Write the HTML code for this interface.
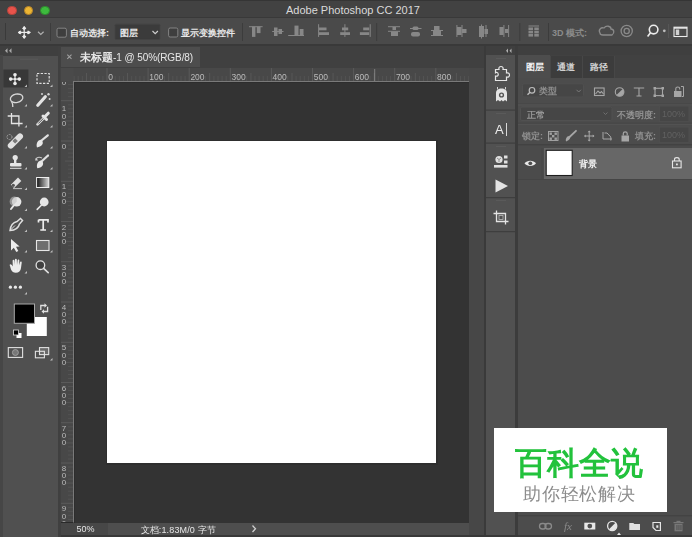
<!DOCTYPE html>
<html><head><meta charset="utf-8">
<style>
*{margin:0;padding:0;box-sizing:border-box}
html,body{width:692px;height:537px;overflow:hidden;background:#2a2a2a;font-family:"Liberation Sans",sans-serif}
.a{position:absolute}
svg{position:absolute;overflow:visible}
#wrap{position:absolute;left:0;top:0;width:692px;height:537px;overflow:hidden;filter:blur(0.4px)}
</style></head><body><div id="wrap">
<!-- title bar -->
<div class="a" style="left:0;top:0;width:692px;height:18px;background:#424242;border-top:1px solid #353535;border-bottom:1px solid #393939"></div>
<div class="a" style="left:7.2px;top:5.6px;width:9.6px;height:9.6px;border-radius:50%;background:#e8534b;border:0.7px solid #b8443c"></div>
<div class="a" style="left:23.9px;top:5.6px;width:9.6px;height:9.6px;border-radius:50%;background:#ecb533;border:0.7px solid #b8862a"></div>
<div class="a" style="left:40.2px;top:5.6px;width:9.6px;height:9.6px;border-radius:50%;background:#3dba3d;border:0.7px solid #2e8a2e"></div>
<div class="a" id="t_title" style="left:286px;top:4px;font-size:11px;color:#dadada">Adobe Photoshop CC 2017</div>
<!-- options bar -->
<div class="a" style="left:0;top:18px;width:692px;height:26px;background:#4a4a4a"></div>

<!-- options bar contents -->
<div class="a" style="left:5px;top:23px;width:1px;height:17px;background:#3a3a3a"></div>
<svg style="left:0;top:0" width="692" height="46" viewBox="0 0 692 46">
 <g fill="#ececec" stroke="none">
  <rect x="18.5" y="31.8" width="12" height="1.2"/>
  <rect x="23.6" y="26.5" width="1.2" height="12"/>
  <path d="M24.2 26 L26.4 28.8 L22 28.8Z M24.2 38.8 L26.4 36 L22 36Z M17.8 32.4 L20.6 30.2 L20.6 34.6Z M30.6 32.4 L27.8 30.2 L27.8 34.6Z"/><circle cx="24.2" cy="28.2" r="1.5"/><circle cx="24.2" cy="36.6" r="1.5"/><circle cx="20" cy="32.4" r="1.5"/><circle cx="28.4" cy="32.4" r="1.5"/>
 </g>
 <path d="M38 31.8 L40.8 34.4 L43.6 31.8" fill="none" stroke="#b0b0b0" stroke-width="1.2"/>
 <rect x="50" y="23" width="1" height="18" fill="#3c3c3c"/>
 <rect x="57" y="28.2" width="9.4" height="9" rx="1.5" fill="#3e3e3e" stroke="#8a8a8a" stroke-width="0.9"/>
 <rect x="115" y="24.2" width="45" height="15.2" rx="1" fill="#3b3b3b" stroke="#444" stroke-width="0.8"/>
 <path d="M152.5 31 L155.2 33.6 L157.9 31" fill="none" stroke="#cfcfcf" stroke-width="1.2"/>
 <rect x="168.6" y="28" width="9.2" height="9" rx="1.5" fill="#3e3e3e" stroke="#8a8a8a" stroke-width="0.9"/>
 <rect x="242" y="23" width="1" height="18" fill="#3c3c3c"/>
 <g fill="#878787">
  <rect x="249" y="26.2" width="13.6" height="1"/><rect x="252" y="26.6" width="3.4" height="10.3"/><rect x="256.8" y="26.6" width="3.7" height="6.5"/>
  <rect x="272.2" y="31" width="11.3" height="1"/><rect x="274" y="27.5" width="3.5" height="8.5"/><rect x="278.5" y="29" width="3.5" height="5"/>
  <rect x="288.2" y="35" width="15.8" height="1"/><rect x="294.5" y="25.6" width="4" height="9.9"/><rect x="299.7" y="29" width="3.8" height="6.5"/>
  <rect x="318.1" y="24.2" width="1" height="12.7"/><rect x="319" y="27.5" width="7.5" height="2.8"/><rect x="319" y="32.2" width="10" height="2.8"/>
  <rect x="344.4" y="24.2" width="1" height="12.7"/><rect x="342" y="27.5" width="6.2" height="2.8"/><rect x="340.2" y="32.2" width="9.8" height="2.8"/>
  <rect x="369.7" y="24.2" width="1" height="12.7"/><rect x="363.2" y="27.5" width="6" height="2.8"/><rect x="359.9" y="32.2" width="9.3" height="2.8"/>
  <rect x="388" y="26.2" width="12" height="1"/><rect x="392.5" y="27" width="3.5" height="3"/><rect x="388" y="30.8" width="12" height="1"/><rect x="391" y="31.5" width="7" height="4.5"/>
  <rect x="410" y="28" width="11.5" height="1"/><rect x="412.5" y="26.5" width="6" height="3.5" rx="1.5"/><rect x="411" y="32" width="9" height="4.5" rx="2"/>
  <rect x="434" y="26" width="5.5" height="4.3"/><rect x="431" y="30" width="12" height="1"/><rect x="433" y="31" width="8" height="4"/><rect x="431" y="35" width="12" height="1"/>
  <rect x="456.4" y="25" width="1" height="12"/><rect x="461.5" y="25" width="1" height="12"/><rect x="457" y="27" width="4.5" height="8"/><rect x="462" y="29" width="4.5" height="4"/>
  <rect x="479" y="26" width="5" height="11"/><rect x="484.5" y="29" width="3.5" height="5"/><rect x="481" y="24.5" width="1" height="14"/><rect x="485.5" y="25" width="1" height="12"/>
  <rect x="503.4" y="25" width="1" height="12"/><rect x="508.1" y="25" width="1" height="12"/><rect x="499.5" y="27" width="4" height="8"/><rect x="505" y="29" width="3" height="4"/>
 </g>
 <rect x="376.2" y="23" width="1" height="18" fill="#3c3c3c"/>
 <rect x="519.3" y="23" width="1" height="18" fill="#3c3c3c"/>
 <g fill="#878787">
  <rect x="528.5" y="25.5" width="10.5" height="1"/>
  <rect x="528.5" y="27.5" width="4.5" height="2.6"/><rect x="534.3" y="27.5" width="4.5" height="2.6"/>
  <rect x="528.5" y="30.8" width="4.5" height="2.6"/><rect x="534.3" y="30.8" width="4.5" height="2.6"/>
  <rect x="528.5" y="34" width="4.5" height="2.6"/><rect x="534.3" y="34" width="4.5" height="2.6"/>
 </g>
 <rect x="548" y="23" width="1" height="18" fill="#3c3c3c"/>
 <g fill="none" stroke="#8a8a8a" stroke-width="1.3">
  <path d="M600 33 C598 30 601 27 604 28 C606 25 611 26 611 29 C614 29 615 33 612 35 L603 35 C601 35 600 34 600 33Z"/>
  <circle cx="626.7" cy="31" r="5.6"/><circle cx="626.7" cy="31" r="2.6"/>
 </g>
 <g fill="none" stroke="#ececec" stroke-width="1.6">
  <circle cx="653.6" cy="29.6" r="4.3"/><path d="M650.5 32.7 L647.6 36.6"/>
 </g>
 <circle cx="664.3" cy="30.8" r="1.4" fill="#bdbdbd"/>
 <rect x="668.3" y="24" width="0.8" height="14" fill="#5c5c5c"/>
 <rect x="674" y="27.2" width="13" height="9.3" fill="none" stroke="#ececec" stroke-width="1.1"/>
 <rect x="674" y="27.2" width="13" height="1.5" fill="#ececec"/>
 <rect x="675.8" y="29.5" width="3.4" height="5.5" fill="#cfcfcf"/>
</svg>
<div class="a" id="t_auto" style="left:70px;top:27px;font-size:9px;color:#e8e8e8;font-weight:bold">自动选择:</div>
<div class="a" id="t_layer" style="left:120px;top:27px;font-size:9px;color:#e8e8e8;font-weight:bold">图层</div>
<div class="a" id="t_show" style="left:181px;top:27px;font-size:9px;color:#e8e8e8;font-weight:bold">显示变换控件</div>
<div class="a" id="t_3d" style="left:552px;top:27px;font-size:9px;color:#8c8c8c;font-weight:bold">3D 模式:</div>
<!-- under options line -->
<div class="a" style="left:0;top:44px;width:692px;height:2.5px;background:#393939"></div>
<!-- left toolbar -->
<div class="a" style="left:0;top:46px;width:58px;height:491px;background:#505050"></div>
<div class="a" style="left:0;top:46px;width:58.3px;height:9.5px;background:#3f3f3f"></div>

<!-- toolbar contents -->
<div class="a" style="left:0;top:55px;width:2.5px;height:482px;background:#464646"></div>
<svg style="left:0;top:0" width="58" height="537" viewBox="0 0 58 537">
 <g fill="#a8a8a8"><path d="M7.5 48.3 L5 50.8 L7.5 53.3Z M11.5 48.3 L9 50.8 L11.5 53.3Z"/></g><rect x="20" y="58.8" width="18" height="0.8" fill="#5c5c5c"/>
 <rect x="3.4" y="69.5" width="25" height="18" fill="#383838"/>
 <!-- move -->
 <g fill="#ececec">
  <rect x="10.5" y="78.5" width="9" height="1.2"/><rect x="14.4" y="74.6" width="1.2" height="9"/>
  <circle cx="15" cy="74.8" r="1.8"/><circle cx="15" cy="83.5" r="1.8"/><circle cx="10.7" cy="79.1" r="1.8"/><circle cx="19.3" cy="79.1" r="1.8"/>
  <circle cx="15" cy="79.1" r="1.1"/>
 </g>
 <!-- marquee -->
 <rect x="37" y="73.5" width="12.2" height="9.8" fill="none" stroke="#dedede" stroke-width="1.2" stroke-dasharray="2.3 1.4"/>
 <!-- lasso -->
 <g fill="none" stroke="#d8d8d8" stroke-width="1.3">
  <ellipse cx="16.6" cy="98.3" rx="6.3" ry="4.2" transform="rotate(-12 16.6 98.3)"/>
  <path d="M11.5 101.5 C12.5 103 13 104.5 12.8 107"/>
 </g>
 <!-- magic wand -->
 <path d="M37.8 105.3 L45.3 96.8" stroke="#e4e4e4" stroke-width="3.2" stroke-linecap="round"/>
 <g fill="#d4d4d4"><circle cx="42" cy="94" r="1"/><circle cx="48.5" cy="94.3" r="1.2"/><circle cx="49.6" cy="99" r="1"/></g>
 <!-- crop -->
 <g fill="none" stroke="#e4e4e4" stroke-width="1.3">
  <path d="M11.5 113 V123.5 H22.6"/><path d="M7.7 116 H18.9 V126.5"/>
 </g>
 <!-- eyedropper -->
 <path d="M37.5 124.3 L44.5 117.3" stroke="#dcdcdc" stroke-width="2.6" stroke-linecap="round" fill="none"/>
 <path d="M38.3 123.5 L44 117.8" stroke="#535353" stroke-width="1" fill="none"/>
 <path d="M43 116 L46.5 119.5 M45 116.5 L48.3 113.2" stroke="#e4e4e4" stroke-width="3" stroke-linecap="round"/>
 <!-- healing -->
 <path d="M10.8 145.6 L20 136.4" stroke="#e0e0e0" stroke-width="6" stroke-linecap="round"/>
 <rect x="13.2" y="139" width="3.8" height="3.8" transform="rotate(-45 15.1 140.9)" fill="#777"/>
 <circle cx="9.5" cy="137" r="2.5" fill="none" stroke="#bdbdbd" stroke-width="0.9" stroke-dasharray="1 0.8"/>
 <!-- brush -->
 <path d="M41.5 140.5 L47.8 135.3" stroke="#e0e0e0" stroke-width="2.2" stroke-linecap="round"/>
 <path d="M37 147.5 C36 144.5 37 140.5 40.5 139.8 C42.8 140.5 43.5 143 42.3 144.6 C41 146.4 39 147.2 37 147.5Z" fill="#e8e8e8"/>
 <!-- stamp -->
 <g fill="#e4e4e4">
  <circle cx="15.2" cy="157.5" r="2.6"/><rect x="14" y="158" width="2.4" height="5"/>
  <rect x="10" y="163" width="11.5" height="3.6" rx="1"/><rect x="10" y="167.8" width="11.5" height="1"/>
 </g>
 <!-- history brush -->
 <path d="M41.5 161.5 L48 155.5" stroke="#e0e0e0" stroke-width="2.2" stroke-linecap="round"/>
 <path d="M37.3 168.3 C36.3 165.3 37.3 161.3 40.8 160.6 C43.1 161.3 43.8 163.8 42.6 165.4 C41.3 167.2 39.3 168 37.3 168.3Z" fill="#e8e8e8"/>
 <path d="M35.5 159.5 C36 157.5 39 156.5 42 158" stroke="#c8c8c8" stroke-width="1.1" fill="none"/>
 <path d="M35 160.5 L38 160.5 L36.5 158Z" fill="#d0d0d0"/>
 <!-- eraser -->
 <path d="M10.8 184.8 L18 177.6 L21.3 180.9 L14.1 188.1Z" fill="#e0e0e0"/>
 <circle cx="13.3" cy="185.3" r="1.6" fill="#555"/>
 <rect x="13" y="188.2" width="9" height="0.9" fill="#cfcfcf"/>
 <!-- gradient -->
 <defs><linearGradient id="gr" x1="0" x2="1" y1="0" y2="0"><stop offset="0" stop-color="#111"/><stop offset="1" stop-color="#d8d8d8"/></linearGradient></defs>
 <rect x="36.6" y="177.5" width="12.2" height="10" fill="url(#gr)" stroke="#efefef" stroke-width="1"/>
 <!-- dodge/burn -->
 <circle cx="16.6" cy="201.8" r="4.8" fill="#e6e6e6"/>
 <path d="M14.5 204.5 L11 209" stroke="#e6e6e6" stroke-width="2" stroke-linecap="round"/>
 <path d="M16.6 201.8 L12.5 206 A4.8 4.8 0 0 1 16.6 197Z" fill="#c2c2c2" opacity="0.6"/>
 <circle cx="44.2" cy="202" r="4.4" fill="#e6e6e6"/>
 <path d="M41.8 204.8 L37.2 209.4" stroke="#e6e6e6" stroke-width="1.6" stroke-linecap="round"/>
 <!-- pen -->
 <path d="M10 230.5 C10.5 226 13 222.5 17 221.5 L20.5 218.5 L22.5 220.5 L19.5 224 C18.5 228 15 230.3 10 230.5Z" fill="none" stroke="#dedede" stroke-width="1.5"/>
 <path d="M10.5 230 L15 225.5" stroke="#dedede" stroke-width="1"/>
 <!-- type -->
 <path d="M38.5 219.8 H48 V222.5 M38.5 222.5 V219.8 M43.2 220 V230 M40.3 230 H46" fill="none" stroke="#ececec" stroke-width="1.7"/>
 <!-- path select -->
 <path d="M11 239 L11 250.5 L13.8 247.8 L16.3 252 L18.3 251 L16 246.8 L19.6 246.4Z" fill="#ececec"/>
 <!-- rectangle -->
 <rect x="36.5" y="240.5" width="12.5" height="10" fill="#6e6e6e" stroke="#e6e6e6" stroke-width="1.1"/>
 <!-- hand -->
 <path d="M10 266 C9 264.5 10.5 263.5 11.8 265 L12.8 266.5 L12.6 260.8 C12.6 259.5 14.3 259.5 14.4 260.8 L14.6 265 L14.9 259.6 C15 258.4 16.7 258.4 16.8 259.6 L17 265 L17.6 260.3 C17.8 259 19.4 259.2 19.3 260.5 L19.2 265.3 L20 262.3 C20.3 261.2 21.9 261.5 21.7 262.7 L21 268 C20.7 270.8 18.8 272.8 15.8 272.8 C13.4 272.8 12.2 271.6 11 269.5Z" fill="#ececec"/>
 <!-- zoom -->
 <circle cx="40.4" cy="265.2" r="4.3" fill="#404040" stroke="#e0e0e0" stroke-width="1.3"/>
 <path d="M43.6 268.4 L48.2 272.6" stroke="#e0e0e0" stroke-width="1.6" stroke-linecap="round"/>
 <!-- dots -->
 <g fill="#e8e8e8"><circle cx="10.4" cy="287.2" r="1.6"/><circle cx="15.4" cy="287.2" r="1.6"/><circle cx="20.4" cy="287.2" r="1.6"/></g>
 <!-- little triangles -->
 <g fill="#bdbdbd">
  <path d="M27 84.5 L27 87 L24.5 87Z"/><path d="M52.5 84.5 L52.5 87 L50 87Z"/>
  <path d="M27 104 L27 106.5 L24.5 106.5Z"/><path d="M52.5 104 L52.5 106.5 L50 106.5Z"/>
  <path d="M27 125 L27 127.5 L24.5 127.5Z"/><path d="M52.5 125 L52.5 127.5 L50 127.5Z"/>
  <path d="M27 146 L27 148.5 L24.5 148.5Z"/><path d="M52.5 146 L52.5 148.5 L50 148.5Z"/>
  <path d="M27 167 L27 169.5 L24.5 169.5Z"/><path d="M52.5 167 L52.5 169.5 L50 169.5Z"/>
  <path d="M27 187.5 L27 190 L24.5 190Z"/><path d="M52.5 187.5 L52.5 190 L50 190Z"/>
  <path d="M27 208.5 L27 211 L24.5 211Z"/><path d="M52.5 208.5 L52.5 211 L50 211Z"/>
  <path d="M27 229.5 L27 232 L24.5 232Z"/><path d="M52.5 229.5 L52.5 232 L50 232Z"/>
  <path d="M27 250 L27 252.5 L24.5 252.5Z"/><path d="M52.5 250 L52.5 252.5 L50 252.5Z"/>
  <path d="M27 271 L27 273.5 L24.5 273.5Z"/>
  <path d="M27 292 L27 294.5 L24.5 294.5Z"/>
  <path d="M52.5 358 L52.5 360.5 L50 360.5Z"/>
 </g>
 <!-- colors -->
 <rect x="26.8" y="317" width="20" height="19" fill="#ffffff"/>
 <rect x="14.3" y="304" width="20.2" height="19.3" fill="#000" stroke="#a8a8a8" stroke-width="1"/>
 <path d="M40.8 310 V305.5 H45" fill="none" stroke="#e0e0e0" stroke-width="1.3"/><path d="M44.5 303.3 L47 305.5 L44.5 307.7Z" fill="#e0e0e0"/><path d="M47.6 306.8 V311.5 H43.5" fill="none" stroke="#e0e0e0" stroke-width="1.3"/><path d="M44 309.3 L41.5 311.5 L44 313.7Z" fill="#e0e0e0"/>
 <rect x="16.5" y="333" width="5" height="5" fill="#fff"/>
 <rect x="13.5" y="330" width="5" height="5" fill="#000" stroke="#ddd" stroke-width="0.8"/>
 <!-- quick mask -->
 <rect x="8.3" y="347.6" width="14.3" height="9.8" fill="none" stroke="#e0e0e0" stroke-width="1.1"/>
 <circle cx="15.4" cy="352.5" r="3" fill="#777" stroke="#aaa" stroke-width="0.8"/>
 <!-- screen mode -->
 <rect x="39.5" y="347.6" width="9.2" height="7" fill="#6a6a6a" stroke="#e0e0e0" stroke-width="1.1"/>
 <rect x="35.4" y="351.3" width="9" height="6.5" fill="none" stroke="#e0e0e0" stroke-width="1.1"/>
</svg>
<!-- divider -->
<div class="a" style="left:58.3px;top:46px;width:2.3px;height:491px;background:#404040"></div>
<!-- doc tab bar -->
<div class="a" style="left:60.6px;top:46px;width:423.4px;height:22px;background:#404040"></div>
<div class="a" style="left:60.6px;top:46.5px;width:139px;height:20.7px;background:#4d4d4d"></div>
<svg style="left:0;top:0" width="80" height="70"><path d="M67.3 54.6 L71.5 58.8 M71.5 54.6 L67.3 58.8" stroke="#a0a0a0" stroke-width="1.1"/></svg>
<div class="a" id="t_tab" style="left:80px;top:50.5px;font-size:10px;color:#e8e8e8;letter-spacing:-0.08px"><b style="font-size:10.5px;letter-spacing:0">未标题</b>-1 @ 50%(RGB/8)</div>
<!-- rulers -->
<svg style="left:0;top:0" width="692" height="537" viewBox="0 0 692 537">
<rect x="60.6" y="68" width="408.9" height="13.5" fill="#484848"/>
<rect x="60.6" y="68" width="12.9" height="454" fill="#484848"/>
<rect x="61" y="68" width="12.5" height="13.5" fill="#4a4a4a"/>
<rect x="73" y="81" width="396" height="1" fill="#7a7a7a"/>
<rect x="73" y="81" width="1" height="441.5" fill="#7a7a7a"/>
<rect x="73.6" y="76" width="1" height="5" fill="#535353"/>
<rect x="77.7" y="76" width="1" height="5" fill="#535353"/>
<rect x="81.8" y="76" width="1" height="5" fill="#535353"/>
<rect x="86.0" y="73" width="1" height="8" fill="#575757"/>
<rect x="90.1" y="76" width="1" height="5" fill="#535353"/>
<rect x="94.2" y="76" width="1" height="5" fill="#535353"/>
<rect x="98.3" y="76" width="1" height="5" fill="#535353"/>
<rect x="102.4" y="76" width="1" height="5" fill="#535353"/>
<rect x="106.5" y="68" width="1" height="13" fill="#5a5a5a"/>
<rect x="110.6" y="76" width="1" height="5" fill="#535353"/>
<rect x="114.7" y="76" width="1" height="5" fill="#535353"/>
<rect x="118.8" y="76" width="1" height="5" fill="#535353"/>
<rect x="122.9" y="76" width="1" height="5" fill="#535353"/>
<rect x="127.0" y="73" width="1" height="8" fill="#575757"/>
<rect x="131.2" y="76" width="1" height="5" fill="#535353"/>
<rect x="135.3" y="76" width="1" height="5" fill="#535353"/>
<rect x="139.4" y="76" width="1" height="5" fill="#535353"/>
<rect x="143.5" y="76" width="1" height="5" fill="#535353"/>
<rect x="147.6" y="68" width="1" height="13" fill="#5a5a5a"/>
<rect x="151.7" y="76" width="1" height="5" fill="#535353"/>
<rect x="155.8" y="76" width="1" height="5" fill="#535353"/>
<rect x="159.9" y="76" width="1" height="5" fill="#535353"/>
<rect x="164.0" y="76" width="1" height="5" fill="#535353"/>
<rect x="168.2" y="73" width="1" height="8" fill="#575757"/>
<rect x="172.3" y="76" width="1" height="5" fill="#535353"/>
<rect x="176.4" y="76" width="1" height="5" fill="#535353"/>
<rect x="180.5" y="76" width="1" height="5" fill="#535353"/>
<rect x="184.6" y="76" width="1" height="5" fill="#535353"/>
<rect x="188.7" y="68" width="1" height="13" fill="#5a5a5a"/>
<rect x="192.8" y="76" width="1" height="5" fill="#535353"/>
<rect x="196.9" y="76" width="1" height="5" fill="#535353"/>
<rect x="201.0" y="76" width="1" height="5" fill="#535353"/>
<rect x="205.1" y="76" width="1" height="5" fill="#535353"/>
<rect x="209.2" y="73" width="1" height="8" fill="#575757"/>
<rect x="213.4" y="76" width="1" height="5" fill="#535353"/>
<rect x="217.5" y="76" width="1" height="5" fill="#535353"/>
<rect x="221.6" y="76" width="1" height="5" fill="#535353"/>
<rect x="225.7" y="76" width="1" height="5" fill="#535353"/>
<rect x="229.8" y="68" width="1" height="13" fill="#5a5a5a"/>
<rect x="233.9" y="76" width="1" height="5" fill="#535353"/>
<rect x="238.0" y="76" width="1" height="5" fill="#535353"/>
<rect x="242.1" y="76" width="1" height="5" fill="#535353"/>
<rect x="246.2" y="76" width="1" height="5" fill="#535353"/>
<rect x="250.4" y="73" width="1" height="8" fill="#575757"/>
<rect x="254.5" y="76" width="1" height="5" fill="#535353"/>
<rect x="258.6" y="76" width="1" height="5" fill="#535353"/>
<rect x="262.7" y="76" width="1" height="5" fill="#535353"/>
<rect x="266.8" y="76" width="1" height="5" fill="#535353"/>
<rect x="270.9" y="68" width="1" height="13" fill="#5a5a5a"/>
<rect x="275.0" y="76" width="1" height="5" fill="#535353"/>
<rect x="279.1" y="76" width="1" height="5" fill="#535353"/>
<rect x="283.2" y="76" width="1" height="5" fill="#535353"/>
<rect x="287.3" y="76" width="1" height="5" fill="#535353"/>
<rect x="291.5" y="73" width="1" height="8" fill="#575757"/>
<rect x="295.6" y="76" width="1" height="5" fill="#535353"/>
<rect x="299.7" y="76" width="1" height="5" fill="#535353"/>
<rect x="303.8" y="76" width="1" height="5" fill="#535353"/>
<rect x="307.9" y="76" width="1" height="5" fill="#535353"/>
<rect x="312.0" y="68" width="1" height="13" fill="#5a5a5a"/>
<rect x="316.1" y="76" width="1" height="5" fill="#535353"/>
<rect x="320.2" y="76" width="1" height="5" fill="#535353"/>
<rect x="324.3" y="76" width="1" height="5" fill="#535353"/>
<rect x="328.4" y="76" width="1" height="5" fill="#535353"/>
<rect x="332.6" y="73" width="1" height="8" fill="#575757"/>
<rect x="336.7" y="76" width="1" height="5" fill="#535353"/>
<rect x="340.8" y="76" width="1" height="5" fill="#535353"/>
<rect x="344.9" y="76" width="1" height="5" fill="#535353"/>
<rect x="349.0" y="76" width="1" height="5" fill="#535353"/>
<rect x="353.1" y="68" width="1" height="13" fill="#5a5a5a"/>
<rect x="357.2" y="76" width="1" height="5" fill="#535353"/>
<rect x="361.3" y="76" width="1" height="5" fill="#535353"/>
<rect x="365.4" y="76" width="1" height="5" fill="#535353"/>
<rect x="369.5" y="76" width="1" height="5" fill="#535353"/>
<rect x="373.7" y="73" width="1" height="8" fill="#575757"/>
<rect x="377.8" y="76" width="1" height="5" fill="#535353"/>
<rect x="381.9" y="76" width="1" height="5" fill="#535353"/>
<rect x="386.0" y="76" width="1" height="5" fill="#535353"/>
<rect x="390.1" y="76" width="1" height="5" fill="#535353"/>
<rect x="394.2" y="68" width="1" height="13" fill="#5a5a5a"/>
<rect x="398.3" y="76" width="1" height="5" fill="#535353"/>
<rect x="402.4" y="76" width="1" height="5" fill="#535353"/>
<rect x="406.5" y="76" width="1" height="5" fill="#535353"/>
<rect x="410.6" y="76" width="1" height="5" fill="#535353"/>
<rect x="414.8" y="73" width="1" height="8" fill="#575757"/>
<rect x="418.9" y="76" width="1" height="5" fill="#535353"/>
<rect x="423.0" y="76" width="1" height="5" fill="#535353"/>
<rect x="427.1" y="76" width="1" height="5" fill="#535353"/>
<rect x="431.2" y="76" width="1" height="5" fill="#535353"/>
<rect x="435.3" y="68" width="1" height="13" fill="#5a5a5a"/>
<rect x="439.4" y="76" width="1" height="5" fill="#535353"/>
<rect x="443.5" y="76" width="1" height="5" fill="#535353"/>
<rect x="447.6" y="76" width="1" height="5" fill="#535353"/>
<rect x="451.7" y="76" width="1" height="5" fill="#535353"/>
<rect x="455.9" y="73" width="1" height="8" fill="#575757"/>
<rect x="460.0" y="76" width="1" height="5" fill="#535353"/>
<rect x="464.1" y="76" width="1" height="5" fill="#535353"/>
<rect x="468.2" y="76" width="1" height="5" fill="#535353"/>
<rect x="68" y="84.1" width="5" height="1" fill="#535353"/>
<rect x="68" y="88.2" width="5" height="1" fill="#535353"/>
<rect x="68" y="92.2" width="5" height="1" fill="#535353"/>
<rect x="68" y="96.2" width="5" height="1" fill="#535353"/>
<rect x="61" y="100.2" width="12" height="1" fill="#5a5a5a"/>
<rect x="68" y="104.3" width="5" height="1" fill="#535353"/>
<rect x="68" y="108.3" width="5" height="1" fill="#535353"/>
<rect x="68" y="112.3" width="5" height="1" fill="#535353"/>
<rect x="68" y="116.3" width="5" height="1" fill="#535353"/>
<rect x="65" y="120.4" width="8" height="1" fill="#575757"/>
<rect x="68" y="124.4" width="5" height="1" fill="#535353"/>
<rect x="68" y="128.4" width="5" height="1" fill="#535353"/>
<rect x="68" y="132.4" width="5" height="1" fill="#535353"/>
<rect x="68" y="136.5" width="5" height="1" fill="#535353"/>
<rect x="61" y="140.5" width="12" height="1" fill="#5a5a5a"/>
<rect x="68" y="144.5" width="5" height="1" fill="#535353"/>
<rect x="68" y="148.6" width="5" height="1" fill="#535353"/>
<rect x="68" y="152.6" width="5" height="1" fill="#535353"/>
<rect x="68" y="156.6" width="5" height="1" fill="#535353"/>
<rect x="65" y="160.6" width="8" height="1" fill="#575757"/>
<rect x="68" y="164.7" width="5" height="1" fill="#535353"/>
<rect x="68" y="168.7" width="5" height="1" fill="#535353"/>
<rect x="68" y="172.7" width="5" height="1" fill="#535353"/>
<rect x="68" y="176.7" width="5" height="1" fill="#535353"/>
<rect x="61" y="180.8" width="12" height="1" fill="#5a5a5a"/>
<rect x="68" y="184.8" width="5" height="1" fill="#535353"/>
<rect x="68" y="188.8" width="5" height="1" fill="#535353"/>
<rect x="68" y="192.8" width="5" height="1" fill="#535353"/>
<rect x="68" y="196.9" width="5" height="1" fill="#535353"/>
<rect x="65" y="200.9" width="8" height="1" fill="#575757"/>
<rect x="68" y="204.9" width="5" height="1" fill="#535353"/>
<rect x="68" y="208.9" width="5" height="1" fill="#535353"/>
<rect x="68" y="212.9" width="5" height="1" fill="#535353"/>
<rect x="68" y="217.0" width="5" height="1" fill="#535353"/>
<rect x="61" y="221.0" width="12" height="1" fill="#5a5a5a"/>
<rect x="68" y="225.0" width="5" height="1" fill="#535353"/>
<rect x="68" y="229.1" width="5" height="1" fill="#535353"/>
<rect x="68" y="233.1" width="5" height="1" fill="#535353"/>
<rect x="68" y="237.1" width="5" height="1" fill="#535353"/>
<rect x="65" y="241.1" width="8" height="1" fill="#575757"/>
<rect x="68" y="245.2" width="5" height="1" fill="#535353"/>
<rect x="68" y="249.2" width="5" height="1" fill="#535353"/>
<rect x="68" y="253.2" width="5" height="1" fill="#535353"/>
<rect x="68" y="257.2" width="5" height="1" fill="#535353"/>
<rect x="61" y="261.2" width="12" height="1" fill="#5a5a5a"/>
<rect x="68" y="265.3" width="5" height="1" fill="#535353"/>
<rect x="68" y="269.3" width="5" height="1" fill="#535353"/>
<rect x="68" y="273.3" width="5" height="1" fill="#535353"/>
<rect x="68" y="277.4" width="5" height="1" fill="#535353"/>
<rect x="65" y="281.4" width="8" height="1" fill="#575757"/>
<rect x="68" y="285.4" width="5" height="1" fill="#535353"/>
<rect x="68" y="289.4" width="5" height="1" fill="#535353"/>
<rect x="68" y="293.5" width="5" height="1" fill="#535353"/>
<rect x="68" y="297.5" width="5" height="1" fill="#535353"/>
<rect x="61" y="301.5" width="12" height="1" fill="#5a5a5a"/>
<rect x="68" y="305.5" width="5" height="1" fill="#535353"/>
<rect x="68" y="309.6" width="5" height="1" fill="#535353"/>
<rect x="68" y="313.6" width="5" height="1" fill="#535353"/>
<rect x="68" y="317.6" width="5" height="1" fill="#535353"/>
<rect x="65" y="321.6" width="8" height="1" fill="#575757"/>
<rect x="68" y="325.6" width="5" height="1" fill="#535353"/>
<rect x="68" y="329.7" width="5" height="1" fill="#535353"/>
<rect x="68" y="333.7" width="5" height="1" fill="#535353"/>
<rect x="68" y="337.7" width="5" height="1" fill="#535353"/>
<rect x="61" y="341.8" width="12" height="1" fill="#5a5a5a"/>
<rect x="68" y="345.8" width="5" height="1" fill="#535353"/>
<rect x="68" y="349.8" width="5" height="1" fill="#535353"/>
<rect x="68" y="353.8" width="5" height="1" fill="#535353"/>
<rect x="68" y="357.9" width="5" height="1" fill="#535353"/>
<rect x="65" y="361.9" width="8" height="1" fill="#575757"/>
<rect x="68" y="365.9" width="5" height="1" fill="#535353"/>
<rect x="68" y="369.9" width="5" height="1" fill="#535353"/>
<rect x="68" y="374.0" width="5" height="1" fill="#535353"/>
<rect x="68" y="378.0" width="5" height="1" fill="#535353"/>
<rect x="61" y="382.0" width="12" height="1" fill="#5a5a5a"/>
<rect x="68" y="386.0" width="5" height="1" fill="#535353"/>
<rect x="68" y="390.1" width="5" height="1" fill="#535353"/>
<rect x="68" y="394.1" width="5" height="1" fill="#535353"/>
<rect x="68" y="398.1" width="5" height="1" fill="#535353"/>
<rect x="65" y="402.1" width="8" height="1" fill="#575757"/>
<rect x="68" y="406.2" width="5" height="1" fill="#535353"/>
<rect x="68" y="410.2" width="5" height="1" fill="#535353"/>
<rect x="68" y="414.2" width="5" height="1" fill="#535353"/>
<rect x="68" y="418.2" width="5" height="1" fill="#535353"/>
<rect x="61" y="422.2" width="12" height="1" fill="#5a5a5a"/>
<rect x="68" y="426.3" width="5" height="1" fill="#535353"/>
<rect x="68" y="430.3" width="5" height="1" fill="#535353"/>
<rect x="68" y="434.3" width="5" height="1" fill="#535353"/>
<rect x="68" y="438.4" width="5" height="1" fill="#535353"/>
<rect x="65" y="442.4" width="8" height="1" fill="#575757"/>
<rect x="68" y="446.4" width="5" height="1" fill="#535353"/>
<rect x="68" y="450.4" width="5" height="1" fill="#535353"/>
<rect x="68" y="454.5" width="5" height="1" fill="#535353"/>
<rect x="68" y="458.5" width="5" height="1" fill="#535353"/>
<rect x="61" y="462.5" width="12" height="1" fill="#5a5a5a"/>
<rect x="68" y="466.5" width="5" height="1" fill="#535353"/>
<rect x="68" y="470.6" width="5" height="1" fill="#535353"/>
<rect x="68" y="474.6" width="5" height="1" fill="#535353"/>
<rect x="68" y="478.6" width="5" height="1" fill="#535353"/>
<rect x="65" y="482.6" width="8" height="1" fill="#575757"/>
<rect x="68" y="486.7" width="5" height="1" fill="#535353"/>
<rect x="68" y="490.7" width="5" height="1" fill="#535353"/>
<rect x="68" y="494.7" width="5" height="1" fill="#535353"/>
<rect x="68" y="498.7" width="5" height="1" fill="#535353"/>
<rect x="61" y="502.8" width="12" height="1" fill="#5a5a5a"/>
<rect x="68" y="506.8" width="5" height="1" fill="#535353"/>
<rect x="68" y="510.8" width="5" height="1" fill="#535353"/>
<rect x="68" y="514.8" width="5" height="1" fill="#535353"/>
<rect x="68" y="518.9" width="5" height="1" fill="#535353"/>
<g font-family="Liberation Sans" font-size="8.5" fill="#bababa">
<text x="108.2" y="80">0</text>
<text x="149.3" y="80">100</text>
<text x="190.4" y="80">200</text>
<text x="231.5" y="80">300</text>
<text x="272.6" y="80">400</text>
<text x="313.7" y="80">500</text>
<text x="354.8" y="80">600</text>
<text x="395.9" y="80">700</text>
<text x="437.0" y="80">800</text>
</g><defs><clipPath id="vr"><rect x="60" y="82" width="14" height="440"/></clipPath></defs><g clip-path="url(#vr)" font-family="Liberation Sans" font-size="8" fill="#bababa">
<text x="61.8" y="85.3">0</text>
<text x="61.8" y="111.4">1</text>
<text x="61.8" y="118.5">0</text>
<text x="61.8" y="125.6">0</text>
<text x="61.8" y="149.2">0</text>
<text x="61.8" y="189.4">1</text>
<text x="61.8" y="196.5">0</text>
<text x="61.8" y="203.6">0</text>
<text x="61.8" y="229.7">2</text>
<text x="61.8" y="236.8">0</text>
<text x="61.8" y="243.9">0</text>
<text x="61.8" y="269.9">3</text>
<text x="61.8" y="277.1">0</text>
<text x="61.8" y="284.1">0</text>
<text x="61.8" y="310.2">4</text>
<text x="61.8" y="317.3">0</text>
<text x="61.8" y="324.4">0</text>
<text x="61.8" y="350.4">5</text>
<text x="61.8" y="357.6">0</text>
<text x="61.8" y="364.6">0</text>
<text x="61.8" y="390.7">6</text>
<text x="61.8" y="397.8">0</text>
<text x="61.8" y="404.9">0</text>
<text x="61.8" y="430.9">7</text>
<text x="61.8" y="438.1">0</text>
<text x="61.8" y="445.1">0</text>
<text x="61.8" y="471.2">8</text>
<text x="61.8" y="478.3">0</text>
<text x="61.8" y="485.4">0</text>
<text x="61.8" y="511.4">9</text>
<text x="61.8" y="518.5">0</text>
<text x="61.8" y="525.6">0</text>
</g><path d="M374.7 69.5 V80.5" stroke="#b8b8b8" stroke-width="1" stroke-dasharray="1 1"/></svg>
<!-- pasteboard -->
<div class="a" style="left:74px;top:82px;width:395px;height:440.5px;background:#333333;border-top:1px solid #2d2d2d;border-left:1px solid #2d2d2d"></div>
<div class="a" style="left:105.5px;top:139.5px;width:332px;height:325px;background:#2e2e2e"></div>
<div class="a" style="left:107px;top:141px;width:329px;height:322px;background:#ffffff"></div>
<!-- scrollbar column -->
<div class="a" style="left:469px;top:68px;width:15px;height:469px;background:#474747"></div>
<!-- status bar -->
<div class="a" style="left:60.6px;top:522.5px;width:408.4px;height:12.5px;background:#4e4e4e"></div>
<div class="a" style="left:60.6px;top:522.5px;width:47.4px;height:12.5px;background:#474747"></div>
<div class="a" style="left:76.5px;top:523.5px;font-size:9px;color:#e6e6e6">50%</div>
<div class="a" style="left:140.5px;top:523.5px;font-size:9px;color:#e6e6e6;letter-spacing:0.15px">文档:1.83M/0 字节</div>
<svg style="left:0;top:0" width="300" height="537"><path d="M252.5 525.5 L255.5 528.8 L252.5 532" fill="none" stroke="#d0d0d0" stroke-width="1.3"/></svg>
<!-- right dividers -->
<div class="a" style="left:483.5px;top:46px;width:2.3px;height:491px;background:#3a3a3a"></div>
<div class="a" style="left:486px;top:46px;width:29px;height:491px;background:#515151"></div>
<div class="a" style="left:486px;top:46px;width:206px;height:9px;background:#3f3f3f"></div>
<div class="a" style="left:515px;top:46px;width:3px;height:491px;background:#3c3c3c"></div>
<svg style="left:0;top:0" width="692" height="537" viewBox="0 0 692 537">
 <g fill="#b0b0b0"><path d="M508 48.5 L506 50.7 L508 52.9Z M511.5 48.5 L509.5 50.7 L511.5 52.9Z"/></g>
 <!-- icon panel groups -->
 <rect x="486" y="109.5" width="29" height="1.2" fill="#3e3e3e"/>
 <rect x="486" y="142.5" width="29" height="1.2" fill="#3e3e3e"/>
 <rect x="486" y="197" width="29" height="1.2" fill="#3e3e3e"/>
 <rect x="486" y="231" width="29" height="1.2" fill="#3e3e3e"/>
 <g fill="#5d5d5d">
  <rect x="496" y="58" width="10" height="0.8"/><rect x="496" y="113" width="10" height="0.8"/><rect x="496" y="146" width="10" height="0.8"/><rect x="496" y="200" width="10" height="0.8"/>
 </g>
 <!-- puzzle -->
 <path d="M495.5 79.5 L495.5 76 C497.5 76.5 498.5 75.5 498.2 74 C498 72.5 496.5 72 495.5 72.8 L495.5 69.5 L499 69.5 C498.5 67.5 499.5 66.5 501 66.5 C502.5 66.5 503.5 67.5 503 69.5 L506.5 69.5 L506.5 73 C508.5 72.5 509.5 73.5 509.5 75 C509.5 76.5 508.5 77.5 506.5 77 L506.5 80.5 L495.5 80.5Z" fill="none" stroke="#e6e6e6" stroke-width="1.2"/>
 <!-- ghost -->
 <path d="M496 101.5 L496 93 C496 90 498.5 88.5 501.5 88.5 C504.5 88.5 507 90 507 93 L507 101.5 L505 100 L503 101.5 L501.5 100 L500 101.5 L498 100Z" fill="#e4e4e4"/>
 <circle cx="501.5" cy="95" r="2.6" fill="#535353"/><circle cx="501.5" cy="95" r="1.2" fill="#e4e4e4"/>
 <rect x="497" y="87" width="1" height="2.5" fill="#d0d0d0"/><rect x="505" y="87" width="1" height="2.5" fill="#d0d0d0"/>
 <!-- 3d icon -->
 <g fill="#e0e0e0">
  <circle cx="499" cy="159.5" r="3.6"/><rect x="504" y="155.5" width="3.5" height="3"/><rect x="504" y="160.5" width="3.5" height="3"/>
  <rect x="494" y="165" width="13.5" height="2.6"/>
 </g>
 <path d="M497 158 L499 159.5 L501 158 M499 159.5 V162" stroke="#7a7a7a" stroke-width="0.8" fill="none"/>
 <!-- play -->
 <path d="M495.5 179.5 L508 186 L495.5 192.5Z" fill="#e4e4e4"/>
 <!-- crop -->
 <g fill="none" stroke="#e4e4e4" stroke-width="1.3">
  <path d="M496.5 210.5 V221.5 H508.5"/><path d="M493.5 213.5 H505.5 V224.5"/>
 </g>
 <rect x="499" y="215.5" width="4" height="4" fill="none" stroke="#bbb" stroke-width="0.8"/>
</svg>
<div class="a" id="t_A" style="left:495px;top:122px;font-size:13px;color:#ececec;line-height:15px">A</div>
<div class="a" style="left:505.5px;top:122.5px;width:1px;height:13.5px;background:#d8d8d8"></div>
<!-- layers panel -->
<div class="a" style="left:518px;top:55px;width:174px;height:482px;background:#4c4c4c"></div>
<div class="a" style="left:518px;top:55px;width:174px;height:22.5px;background:#414141"></div>
<div class="a" style="left:518px;top:55px;width:32px;height:22.5px;background:#4d4d4d"></div>
<div class="a" style="left:550px;top:55.5px;width:32px;height:22px;background:#3c3c3c;border-left:1px solid #474747"></div>
<div class="a" style="left:582px;top:55.5px;width:33px;height:22px;background:#3c3c3c;border-left:1px solid #474747;border-right:1px solid #474747"></div>
<div class="a" id="t_tab1" style="left:525.5px;top:60.5px;font-size:9.3px;color:#f2f2f2;font-weight:bold">图层</div>
<div class="a" id="t_tab2" style="left:556.5px;top:60.5px;font-size:9.3px;color:#d0d0d0;font-weight:bold">通道</div>
<div class="a" id="t_tab3" style="left:589.5px;top:60.5px;font-size:9.3px;color:#d0d0d0;font-weight:bold">路径</div>
<svg style="left:0;top:0" width="692" height="537" viewBox="0 0 692 537">
 <!-- filter row -->
 <rect x="522.5" y="83.8" width="61" height="13.2" rx="1.5" fill="#464646" stroke="#525252" stroke-width="0.8"/>
 <circle cx="532" cy="90.3" r="2.8" fill="none" stroke="#bdbdbd" stroke-width="1.2"/>
 <path d="M530 92.3 L527.5 94.8" stroke="#bdbdbd" stroke-width="1.4"/>
 <path d="M576.5 89.8 L578.7 92 L580.9 89.8" fill="none" stroke="#7a7a7a" stroke-width="1"/>
 <g fill="none" stroke="#a6a6a6" stroke-width="1.1">
  <rect x="594.5" y="88" width="9.6" height="7.5"/>
  <path d="M595.5 94 L598 91 L600 93 L601.5 91.5 L603.5 94"/>
  <circle cx="619.6" cy="92" r="4.3"/>
  <path d="M633.8 88 H644.2 M639 88 V96 M636.5 96 H641.5"/>
  <rect x="655" y="88.3" width="7.5" height="7.3"/>
 </g>
 <path d="M616.5 95 L622.7 88.9 A4.3 4.3 0 0 1 616.5 95Z" fill="#a6a6a6"/>
 <g fill="#a6a6a6"><rect x="653.5" y="87" width="2.5" height="2.5"/><rect x="661.5" y="87" width="2.5" height="2.5"/><rect x="653.5" y="94.5" width="2.5" height="2.5"/><rect x="661.5" y="94.5" width="2.5" height="2.5"/></g>
 <path d="M640 86 L644 86 L644 88" fill="none" stroke="#a6a6a6" stroke-width="0"/>
 <rect x="674" y="91" width="7.5" height="6" fill="#a6a6a6"/>
 <path d="M675.8 91 V88.5 C675.8 86.5 679.7 86.5 679.7 88.5 V89.5" fill="none" stroke="#a6a6a6" stroke-width="1.1"/>
 <path d="M681 86.5 L683.5 86.5 L683.5 96.5 L682 96.5" fill="none" stroke="#a6a6a6" stroke-width="1"/>
 <rect x="518" y="103.5" width="174" height="1" fill="#444"/>
 <rect x="518" y="104.5" width="174" height="0.8" fill="#565656"/>
 <!-- blend row -->
 <rect x="520.5" y="107" width="91.5" height="13.5" rx="1.5" fill="#464646" stroke="#535353" stroke-width="0.8"/>
 <path d="M603.5 112.5 L605.5 114.5 L607.5 112.5" fill="none" stroke="#6e6e6e" stroke-width="1"/>
 <rect x="659.5" y="106" width="29.5" height="15.5" fill="#464646" stroke="#505050" stroke-width="0.8"/>
 <rect x="518" y="122.8" width="174" height="1" fill="#444"/>
 <rect x="518" y="123.8" width="174" height="0.8" fill="#565656"/>
 <!-- lock row -->
 <g fill="#a0a0a0">
  <rect x="548.5" y="131.5" width="9.5" height="9" fill="none" stroke="#a0a0a0" stroke-width="1"/>
  <rect x="549.5" y="132.5" width="2.4" height="2.4"/><rect x="554.5" y="132.5" width="2.4" height="2.4"/><rect x="552" y="135" width="2.4" height="2.4"/><rect x="549.5" y="137.5" width="2.4" height="2.4"/><rect x="554.5" y="137.5" width="2.4" height="2.4"/>
 </g>
 <path d="M569.5 137 L576 130.8" stroke="#a6a6a6" stroke-width="1.8" stroke-linecap="round"/>
 <path d="M566 141.5 C565.3 139 566.5 136.2 569.2 136 C570.8 137 570.6 139.6 566 141.5Z" fill="#a6a6a6"/>
 <g stroke="#a6a6a6" stroke-width="1" fill="#a6a6a6">
  <path d="M584.5 136 H594 M589.2 131.3 V140.8"/>
 </g>
 <g fill="#a6a6a6"><path d="M589.2 130.5 L590.8 132.3 L587.6 132.3Z M589.2 141.5 L590.8 139.7 L587.6 139.7Z M584 136 L585.8 134.4 L585.8 137.6Z M594.5 136 L592.7 134.4 L592.7 137.6Z"/></g>
 <path d="M603 132 V139 H612 M604.5 133 H607 L610.8 137 V140.5" fill="none" stroke="#a6a6a6" stroke-width="1"/>
 <rect x="621.5" y="135.5" width="7.5" height="6" fill="#a6a6a6"/>
 <path d="M623.3 135.5 V133.5 C623.3 131.3 627.2 131.3 627.2 133.5 V135.5" fill="none" stroke="#a6a6a6" stroke-width="1.2"/>
 <rect x="659.5" y="127" width="29.5" height="15.5" fill="#464646" stroke="#505050" stroke-width="0.8"/>
 <rect x="518" y="144.3" width="174" height="1.2" fill="#3f3f3f"/>
 <!-- layer row -->
 <rect x="518" y="145.5" width="174" height="33.5" fill="#4b4b4b"/>
 <rect x="541.5" y="148" width="1" height="31" fill="#474747"/>
 <rect x="544" y="148" width="148" height="31" fill="#676767"/>
 <rect x="518" y="179" width="174" height="1" fill="#454545"/>
 <path d="M524.5 163.3 C527 159.8 533.5 159.8 536 163.3 C533.5 166.8 527 166.8 524.5 163.3Z" fill="#eaeaea"/>
 <circle cx="530.3" cy="163.3" r="1.9" fill="#4f4f4f"/>
 <rect x="546.2" y="150.3" width="26" height="25.2" fill="#fff" stroke="#1e1e1e" stroke-width="1.1"/>
 <rect x="672.5" y="161" width="8.6" height="6.8" fill="none" stroke="#e6e6e6" stroke-width="1.1"/>
 <path d="M674.5 161 V159.5 C674.5 157 679.2 157 679.2 159.5 V161" fill="none" stroke="#e6e6e6" stroke-width="1.1"/>
 <rect x="676" y="163.5" width="1.8" height="1.8" fill="#e6e6e6"/>
 <!-- bottom bar -->
 <rect x="518" y="515.3" width="174" height="1" fill="#404040"/>
 <rect x="518" y="535" width="174" height="2" fill="#3a3a3a"/>
 <g fill="none" stroke="#8a8a8a" stroke-width="1.3">
  <rect x="539.5" y="523.5" width="6.5" height="5.5" rx="2.7"/><rect x="545" y="523.5" width="6.5" height="5.5" rx="2.7"/>
 </g>
 <text x="564" y="530" font-family="Liberation Serif" font-style="italic" font-size="11" fill="#8a8a8a">fx</text>
 <rect x="584.3" y="522.7" width="11" height="6.8" fill="#e8e8e8"/>
 <circle cx="589.8" cy="526.1" r="2.4" fill="#505050"/>
 <circle cx="612.2" cy="526" r="4.6" fill="none" stroke="#e6e6e6" stroke-width="1.3"/>
 <path d="M609 529.3 L615.5 522.7 A4.6 4.6 0 0 1 609 529.3Z" fill="#e6e6e6"/>
 <path d="M619 532.5 L621 535 L617 535Z" fill="#e6e6e6"/>
 <path d="M629.3 523 H633.3 L634.3 524 H640 V530 H629.3Z" fill="#e0e0e0"/>
 <path d="M653 522.5 H660.4 V530.5 H656 L653 527.5Z" fill="none" stroke="#e6e6e6" stroke-width="1.2"/>
 <rect x="656.3" y="525.3" width="2" height="2.5" fill="#e6e6e6"/>
 <g fill="#777"><rect x="673.5" y="522" width="10" height="1.2"/><rect x="676.5" y="520.8" width="4" height="1.2"/><rect x="674.5" y="523.8" width="8" height="7.5"/></g>
 <g fill="#4d4d4d"><rect x="676.5" y="525" width="0.9" height="5"/><rect x="678.5" y="525" width="0.9" height="5"/><rect x="680.5" y="525" width="0.9" height="5"/></g>
</svg>
<div class="a" id="t_type" style="left:538.5px;top:85px;font-size:9px;color:#8e8e8e;font-weight:bold">类型</div>
<div class="a" id="t_normal" style="left:527px;top:108.5px;font-size:9px;color:#959595;font-weight:bold">正常</div>
<div class="a" id="t_opac" style="left:617px;top:108.5px;font-size:9px;color:#929292;font-weight:bold">不透明度:</div>
<div class="a" style="left:662px;top:109px;font-size:9px;color:#616161">100%</div>
<div class="a" id="t_lock" style="left:522px;top:129.5px;font-size:9px;color:#8e8e8e;font-weight:bold">锁定:</div>
<div class="a" id="t_fill" style="left:635px;top:129.5px;font-size:9px;color:#8e8e8e;font-weight:bold">填充:</div>
<div class="a" style="left:662px;top:130px;font-size:9px;color:#616161">100%</div>
<div class="a" id="t_bg" style="left:578.5px;top:158px;font-size:9.3px;color:#f2f2f2;font-weight:bold">背景</div>
<!-- watermark -->
<div class="a" style="left:494px;top:428px;width:173px;height:84px;background:#fff"></div>
<div class="a" style="left:515px;top:442.5px;font-size:31.5px;font-weight:bold;color:#22c23c;letter-spacing:0px">百科全说</div>
<div class="a" style="left:523px;top:480.5px;font-size:18.4px;color:#8c8c8c;letter-spacing:0.8px">助你轻松解决</div>
<div class="a" style="left:60.6px;top:535.3px;width:457.4px;height:1.7px;background:#383838"></div>
</div></body></html>
